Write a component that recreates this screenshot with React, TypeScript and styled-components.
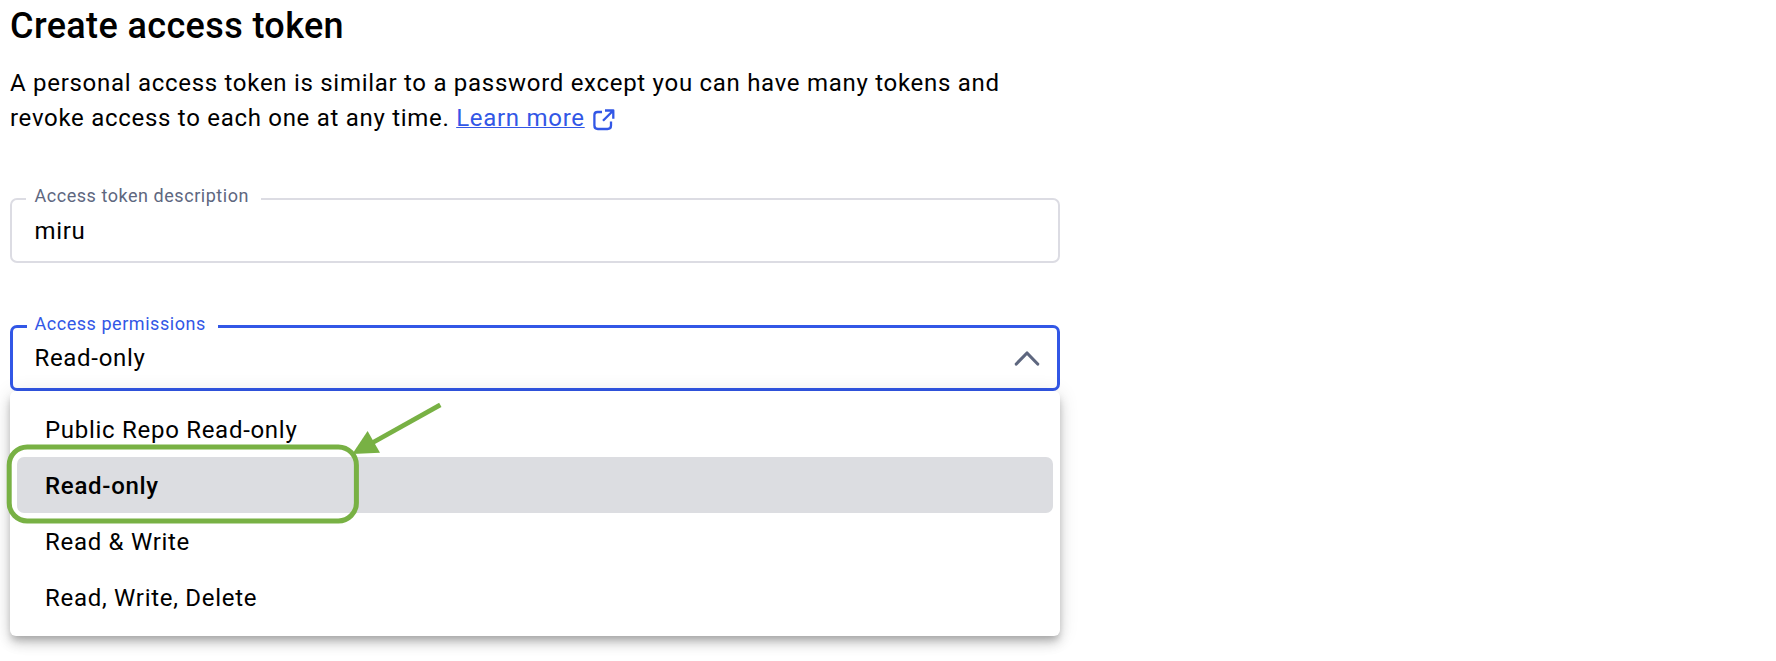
import React from "react";
import styled, { createGlobalStyle } from "styled-components";

const blue = "#3257e6";
const green = "#78b144";

const Global = createGlobalStyle`
  body { margin: 0; background: #fff; color: #000; font-family: Roboto, sans-serif; }
  *, *::before, *::after { box-sizing: border-box; }
`;

const Page = styled.main`
  position: relative;
  width: 1060px;
  height: 661px;
  padding: 4px 0 0 10px;
`;

const Title = styled.h1`
  margin: 0;
  font-size: 36px;
  line-height: 44px;
  font-weight: 500;
  letter-spacing: 0.38px;
  white-space: nowrap;
`;

const Intro = styled.p`
  margin: 17.6px 0 0;
  font-size: 24px;
  line-height: 35px;
  letter-spacing: 0.71px;
  white-space: nowrap;
`;

const Link = styled.a`
  color: ${blue};
  text-decoration: underline;
  text-decoration-thickness: 1px;
  text-underline-offset: 1px;
  text-decoration-skip-ink: none;
`;

const ExternalIcon = styled.svg`
  width: 22px;
  height: 22px;
  margin-left: 8px;
  vertical-align: -5px;
`;

const Field = styled.div<{ $active?: boolean; $gap: number }>`
  position: relative;
  display: flex;
  align-items: center;
  justify-content: space-between;
  height: ${(p) => (p.$active ? 66 : 65)}px;
  margin-top: ${(p) => p.$gap}px;
  padding: 0 16px 0 ${(p) => (p.$active ? 21 : 22)}px;
  border: ${(p) => (p.$active ? `3px solid ${blue}` : "2px solid #dcdce3")};
  border-radius: 7px;
`;

const Label = styled.label<{ $active?: boolean; $width: number }>`
  position: absolute;
  top: -16px;
  left: 14px;
  width: ${(p) => p.$width}px;
  padding-left: ${(p) => (p.$active ? 7.5 : 8.5)}px;
  background: #fff;
  color: ${(p) => (p.$active ? blue : "#5e677f")};
  font-size: 18px;
  line-height: 23px;
  letter-spacing: 0.54px;
  white-space: nowrap;
`;

const Value = styled.span<{ $drop?: number }>`
  padding: ${(p) => p.$drop ?? 0}px 0 0 0.4px;
  font-size: 24px;
  line-height: 36px;
  letter-spacing: 0.7px;
`;

const Chevron = styled.svg`
  width: 28px;
  height: 28px;
`;

const Menu = styled.ul`
  position: relative;
  margin: 0;
  padding: 10px 7px 11px;
  list-style: none;
  border-radius: 6px;
  background: #fff;
  box-shadow: 0 5px 7px -2px rgba(0, 0, 0, 0.2), 0 8px 12px 0 rgba(0, 0, 0, 0.14),
    0 2px 20px 0 rgba(0, 0, 0, 0.12);
`;

const Item = styled.li<{ $selected?: boolean }>`
  height: 56px;
  padding-left: 28px;
  border-radius: 7px;
  background: ${(p) => (p.$selected ? "#dcdde1" : "transparent")};
  font-size: 24px;
  line-height: 58px;
  font-weight: ${(p) => (p.$selected ? 500 : 400)};
  letter-spacing: 0.71px;
`;

const Annotation = styled.svg`
  position: absolute;
  left: 0;
  top: 395px;
  width: 460px;
  height: 140px;
  pointer-events: none;
`;

const options = ["Public Repo Read-only", "Read-only", "Read & Write", "Read, Write, Delete"];

export default function App() {
  return (
    <Page>
      <Global />
      <Title>Create access token</Title>
      <Intro>
        A personal access token is similar to a password except you can have many tokens and
        <br />
        revoke access to each one at any time. <Link>Learn more</Link>
        <ExternalIcon
          viewBox="0 0 22 22"
          fill="none"
          stroke={blue}
          strokeWidth="2.3"
          strokeLinejoin="round"
        >
          <path d="M9 3H4.5Q1.4 3 1.4 6V16.5Q1.4 20 4.9 20H14.5Q18 20 18 16.5V12.5M12 1.5H20.3V9.8M20 1.8L10 11.8" />
        </ExternalIcon>
      </Intro>
      <Field $gap={62.4}>
        <Label $width={235}>Access token description</Label>
        <Value $drop={1}>miru</Value>
      </Field>
      <Field $active $gap={62}>
        <Label $active $width={191}>Access permissions</Label>
        <Value>Read-only</Value>
        <Chevron
          viewBox="0 0 28 28"
          fill="none"
          stroke="#5e677f"
          strokeWidth="3.2"
          strokeLinecap="round"
          strokeLinejoin="round"
        >
          <path d="M3.3 20L14 9L24.7 20" />
        </Chevron>
      </Field>
      <Menu>
        {options.map((name) => (
          <Item key={name} $selected={name === "Read-only"}>
            {name}
          </Item>
        ))}
      </Menu>
      <Annotation viewBox="0 395 460 140" fill="none" stroke={green}>
        <rect x="9.2" y="446.9" width="347.2" height="74" rx="18" strokeWidth="5" />
        <path d="M440.3 404.8L372 443" strokeWidth="4.8" />
        <path d="M352.3 454L367.6 431L380 452.7Z" fill={green} stroke="none" />
      </Annotation>
    </Page>
  );
}
